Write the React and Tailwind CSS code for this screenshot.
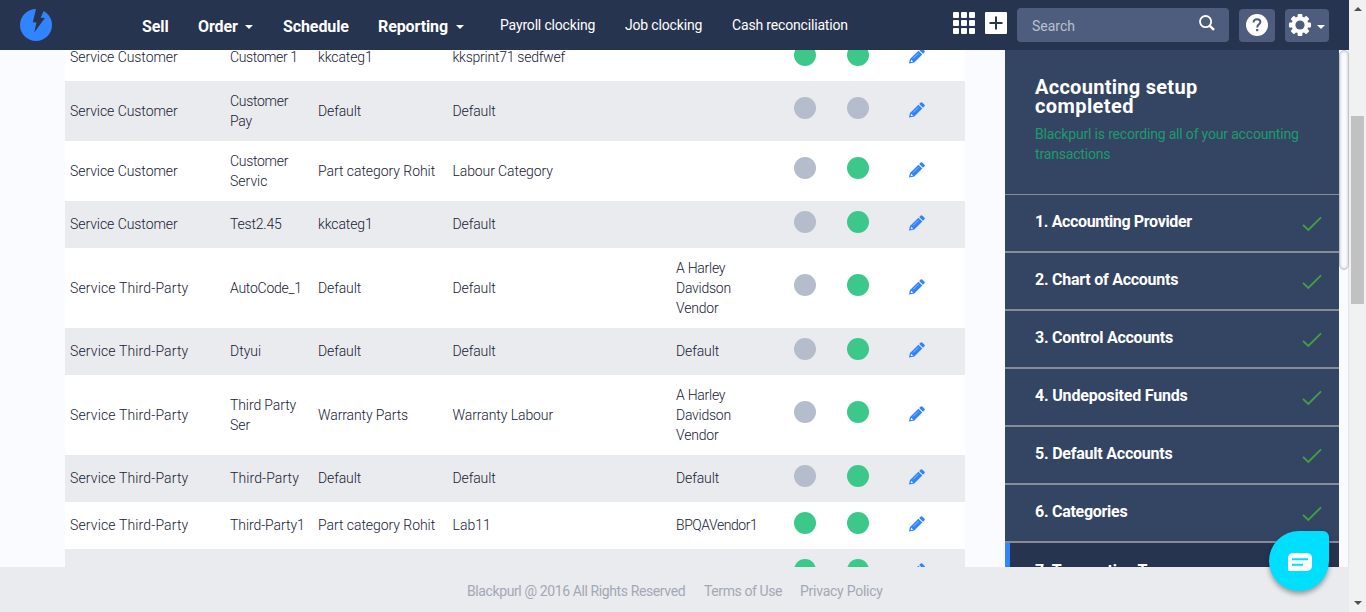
import React from "react";

const rows = [
  ["Service Customer", ["Customer 1"], "kkcateg1", "kksprint71 sedfwef", [], true, true],
  ["Service Customer", ["Customer", "Pay"], "Default", "Default", [], false, false],
  ["Service Customer", ["Customer", "Servic"], "Part category Rohit", "Labour Category", [], false, true],
  ["Service Customer", ["Test2.45"], "kkcateg1", "Default", [], false, true],
  ["Service Third-Party", ["AutoCode_1"], "Default", "Default", ["A Harley", "Davidson", "Vendor"], false, true],
  ["Service Third-Party", ["Dtyui"], "Default", "Default", ["Default"], false, true],
  ["Service Third-Party", ["Third Party", "Ser"], "Warranty Parts", "Warranty Labour", ["A Harley", "Davidson", "Vendor"], false, true],
  ["Service Third-Party", ["Third-Party"], "Default", "Default", ["Default"], false, true],
  ["Service Third-Party", ["Third-Party1"], "Part category Rohit", "Lab11", ["BPQAVendor1"], true, true],
  ["", [], "", "", [], true, true],
];

const steps = [
  ["1. Accounting Provider", "tracking-[-0.36px]"],
  ["2. Chart of Accounts", "tracking-[-0.25px]"],
  ["3. Control Accounts", "tracking-[-0.24px]"],
  ["4. Undeposited Funds", "tracking-[-0.18px]"],
  ["5. Default Accounts", "tracking-[-0.22px]"],
  ["6. Categories", "tracking-[-0.28px]"],
];

// Letter spacing per string.
const tracking = {
  "Service Customer": "tracking-[-0.06px]",
  "Service Third-Party": "tracking-[0.14px]",
  "Customer 1": "tracking-[-0.4px]",
  Customer: "tracking-[-0.3px]",
  Pay: "tracking-[-0.2px]",
  "Test2.45": "tracking-[-0.2px]",
  AutoCode_1: "tracking-[-0.25px]",
  "Third Party": "tracking-[-0.1px]",
  "Third-Party": "tracking-[0.1px]",
  "Third-Party1": "tracking-[-0.08px]",
  kkcateg1: "tracking-[-0.12px]",
  "kksprint71 sedfwef": "tracking-[-0.25px]",
  Default: "tracking-[-0.12px]",
  "Part category Rohit": "tracking-[-0.05px]",
  "Labour Category": "tracking-[-0.1px]",
  "Warranty Parts": "tracking-[-0.1px]",
  "Warranty Labour": "tracking-[-0.07px]",
  "A Harley": "tracking-[-0.25px]",
  Davidson: "tracking-[-0.25px]",
  Vendor: "tracking-[-0.2px]",
  BPQAVendor1: "tracking-[-0.45px]",
};

function Txt({ children }) {
  return <div className={"whitespace-nowrap " + (tracking[children] || "")}>{children}</div>;
}

function Pencil() {
  return (
    <svg width="16" height="16" viewBox="0 0 16 16" className="block" fill="#3184ff">
      <path d="M10.2 2 11.7.5a1.1 1.1 0 0 1 1.5 0l2.3 2.3a1.1 1.1 0 0 1 0 1.5L14 5.8z" />
      <path fillRule="evenodd" d="M9.4 2.7 13.3 6.6 5.3 14.6 .4 15.6 0 15.2 1 10.9zM2.3 11.8 1.6 14.3 4.1 13.6z" />
      <path d="M4.2 10.4 9.4 5.2" stroke="#b5d1ff" strokeWidth=".7" />
    </svg>
  );
}

function Dot({ on }) {
  return <span className={"block h-[22px] w-[22px] rounded-full " + (on ? "bg-[#3bc88a]" : "bg-[#b5bccc]")} />;
}

function Caret() {
  return <span className="block h-0 w-0 border-x-4 border-t-4 border-x-transparent border-t-white" />;
}

function Row({ r, i }) {
  const lines = Math.max(r[1].length, r[4].length);
  const h = lines === 3 ? "h-20" : lines === 2 ? "h-[60px]" : "h-[47px]";
  const single = lines < 2;
  const text = single ? "pb-px" : "";
  const dot = single ? "pb-[5px]" : "pb-1.5";
  return (
    <div className={"grid shrink-0 grid-cols-[160px_88px_134.5px_223.5px_118px_53px_62px_1fr] items-center pl-[5px] text-sm leading-5 " + h + (i % 2 ? " bg-[#eaebef]" : " bg-white")}>
      <div className={text}><Txt>{r[0]}</Txt></div>
      <div className={text}>{r[1].map((t) => <Txt key={t}>{t}</Txt>)}</div>
      <div className={text}><Txt>{r[2]}</Txt></div>
      <div className={text}><Txt>{r[3]}</Txt></div>
      <div className={text}>{r[4].map((t) => <Txt key={t}>{t}</Txt>)}</div>
      <div className={dot}><Dot on={r[5]} /></div>
      <div className={dot}><Dot on={r[6]} /></div>
      <div className="pb-[3px]"><Pencil /></div>
    </div>
  );
}

function Check() {
  return (
    <svg width="20" height="16" viewBox="0 0 20 16" fill="none" stroke="#43a047" strokeWidth="1.8">
      <path d="M1 8.8 6.3 14 19 1.3" />
    </svg>
  );
}

function Gear() {
  const teeth = [0, 45, 90, 135];
  return (
    <svg width="22" height="22" viewBox="0 0 22 22" className="block">
      {teeth.map((a) => (
        <rect key={a} x="8.6" y="0" width="4.8" height="22" rx="1" fill="#fff" transform={`rotate(${a} 11 11)`} />
      ))}
      <circle cx="11" cy="11" r="8.4" fill="#fff" />
      <circle cx="11" cy="11" r="4.6" fill="#4e5d7e" />
    </svg>
  );
}

function Header() {
  return (
    <header className="flex h-[50px] shrink-0 items-center bg-[#27344f] text-white">
      <svg className="ml-5 block" width="32" height="32" viewBox="0 0 32 32">
        <circle cx="16" cy="16" r="16" fill="#3184ff" />
        <path d="M16 0 12.8 13.3 16.5 13.6 14.2 23.5 24.9 9 20.6 8.8 24.6 0z" fill="#27344f" />
      </svg>
      <nav className="ml-[90px] flex w-[358px] shrink-0 items-center pt-[3px] text-base font-bold tracking-[-0.1px]">
        <span className="w-14">Sell</span>
        <span className="flex w-[85px] items-center"><span className="w-[47px]">Order</span><Caret /></span>
        <span className="w-[95px]">Schedule</span>
        <span className="flex items-center"><span className="w-[78px]">Reporting</span><Caret /></span>
      </nav>
      <nav className="flex w-[453px] shrink-0 items-center text-sm tracking-[-0.17px]">
        <span className="w-[125px]">Payroll clocking</span>
        <span className="w-[107px]">Job clocking</span>
        <span>Cash reconciliation</span>
      </nav>
      <div className="mb-1 grid grid-cols-3 gap-0.5">
        {[0, 1, 2, 3, 4, 5, 6, 7, 8].map((n) => <span key={n} className="h-1.5 w-1.5 rounded-[1px] bg-white" />)}
      </div>
      <div className="mb-1 ml-2.5 flex h-[22px] w-[22px] items-center justify-center rounded-[1px] bg-white">
        <svg width="14" height="14" viewBox="0 0 14 14" stroke="#27344f" strokeWidth="2"><path d="M7 .5V13.5M.5 7H13.5" /></svg>
      </div>
      <div className="ml-2.5 flex h-[34px] w-[212px] items-center justify-between rounded bg-[#4e5d7e] pl-[15px] pr-3.5 text-sm text-[#b9c0cf]">
        <span className="pt-0.5">Search</span>
        <svg width="16" height="16" viewBox="0 0 16 16" className="mb-1" fill="none" stroke="#fff"><circle cx="6.6" cy="6.6" r="5.6" strokeWidth="1.8" /><path d="M10.8 10.8 15 14.8" strokeWidth="2.5" /></svg>
      </div>
      <div className="ml-2.5 mt-px flex h-[33px] w-9 items-center justify-center rounded bg-[#4e5d7e]">
        <span className="mb-px flex h-[22px] w-[22px] items-center justify-center rounded-full bg-white">
          <svg width="10" height="14" viewBox="0 0 10 14" fill="none" stroke="#4e5d7e" strokeWidth="2"><path d="M1.6 4.4C1.6 2.3 3 1.2 5 1.2S8.4 2.4 8.4 4.1C8.4 6.3 5.2 6.3 5.2 9.4" /><path d="M5.2 11V13.2" strokeWidth="2.2" /></svg>
        </span>
      </div>
      <div className="ml-2.5 mt-px flex h-[33px] w-11 items-center rounded bg-[#4e5d7e] pl-1">
        <div className="mb-px mr-1.5"><Gear /></div>
        <div className="pt-0.5"><Caret /></div>
      </div>
    </header>
  );
}

export default function App() {
  return (
    <div className="relative flex h-[612px] w-[1366px] overflow-hidden bg-[#fafbfe] font-['Roboto',sans-serif] text-[#27344f]">
      <div className="flex w-[1349px] flex-col">
        <Header />
        <div className="flex h-[517px] shrink-0 overflow-hidden">
          <main className="ml-[65px] flex w-[900px] shrink-0 flex-col font-light text-[#172033]">
            <div className="-mt-4 flex flex-col">
              {rows.map((r, i) => <Row key={i} r={r} i={i} />)}
            </div>
          </main>
          <aside className="ml-10 w-[334px] shrink-0 bg-[#344563]">
            <div className="h-[145px] border-b border-[#868b96] pl-[30px] pt-7">
              <h1 className="text-xl font-bold leading-[19px] text-white">
                <span className="block tracking-[0.28px]">Accounting setup</span>
                <span className="block tracking-[0.4px]">completed</span>
              </h1>
              <p className="mt-2 whitespace-nowrap text-sm leading-5 tracking-[-0.18px] text-[#1c9b6d]">Blackpurl is recording all of your accounting<br />transactions</p>
            </div>
            {steps.map(([s, spacing]) => (
              <div key={s} className="flex h-[58px] items-center justify-between border-b-2 border-[#868b96] pl-[30px] pr-[17px] text-base font-bold text-white">
                <span className={"pb-0.5 " + spacing}>{s}</span>
                <div className="pt-px"><Check /></div>
              </div>
            ))}
            <div className="flex h-[58px] items-center border-b-2 border-l-[5px] border-b-[#868b96] border-l-[#3184ff] bg-[#27344f] pl-[25px] text-base font-bold text-white">
              <span className="tracking-[-0.25px]">7. Transaction Types</span>
            </div>
          </aside>
          <div className="w-2.5 shrink-0 border-r border-[#e4e5e8] bg-[#fafbfe]">
            <div className="h-[220px] w-2.5 rounded-[5px] border border-[#c3c4c8] bg-[#fafbfe] shadow-[inset_0_0_3px_rgba(0,0,0,0.25)]" />
          </div>
        </div>
        <footer className="flex h-[45px] items-center bg-[#eaebef] pl-[467px] pt-[3px] text-sm text-[#a3a8b5]">
          <span className="w-[237px] tracking-[-0.39px]">Blackpurl @ 2016 All Rights Reserved</span>
          <span className="w-24 tracking-[-0.4px]">Terms of Use</span>
          <span className="tracking-[-0.25px]">Privacy Policy</span>
        </footer>
      </div>
      <div className="flex w-[17px] flex-col items-center justify-between bg-[#f1f1f1] py-[7px]">
        <span className="h-0 w-0 border-x-4 border-b-4 border-x-transparent border-b-[#505050]" />
        <span className="mb-auto mt-[105px] h-[188px] w-[13px] bg-[#c1c1c1]" />
        <span className="h-0 w-0 border-x-4 border-t-4 border-x-transparent border-t-[#505050]" />
      </div>
      <div className="absolute left-[1269px] top-[531px] flex h-[60px] w-[60px] items-center justify-center rounded-[30px] rounded-tr-[6px] bg-[#00dfff] shadow-[0_3px_5px_rgba(0,0,0,0.35)]">
        <svg width="24" height="18" viewBox="0 0 24 18" className="ml-0.5 mt-0.5">
          <path d="M5 0H19a5 5 0 0 1 5 5V13a5 5 0 0 1-5 5H1.5A1.5 1.5 0 0 1 0 16.5V5A5 5 0 0 1 5 0z" fill="#fff" />
          <path d="M4 6.2H20M4 11.8H15" stroke="#00dfff" strokeWidth="2" />
        </svg>
      </div>
    </div>
  );
}
